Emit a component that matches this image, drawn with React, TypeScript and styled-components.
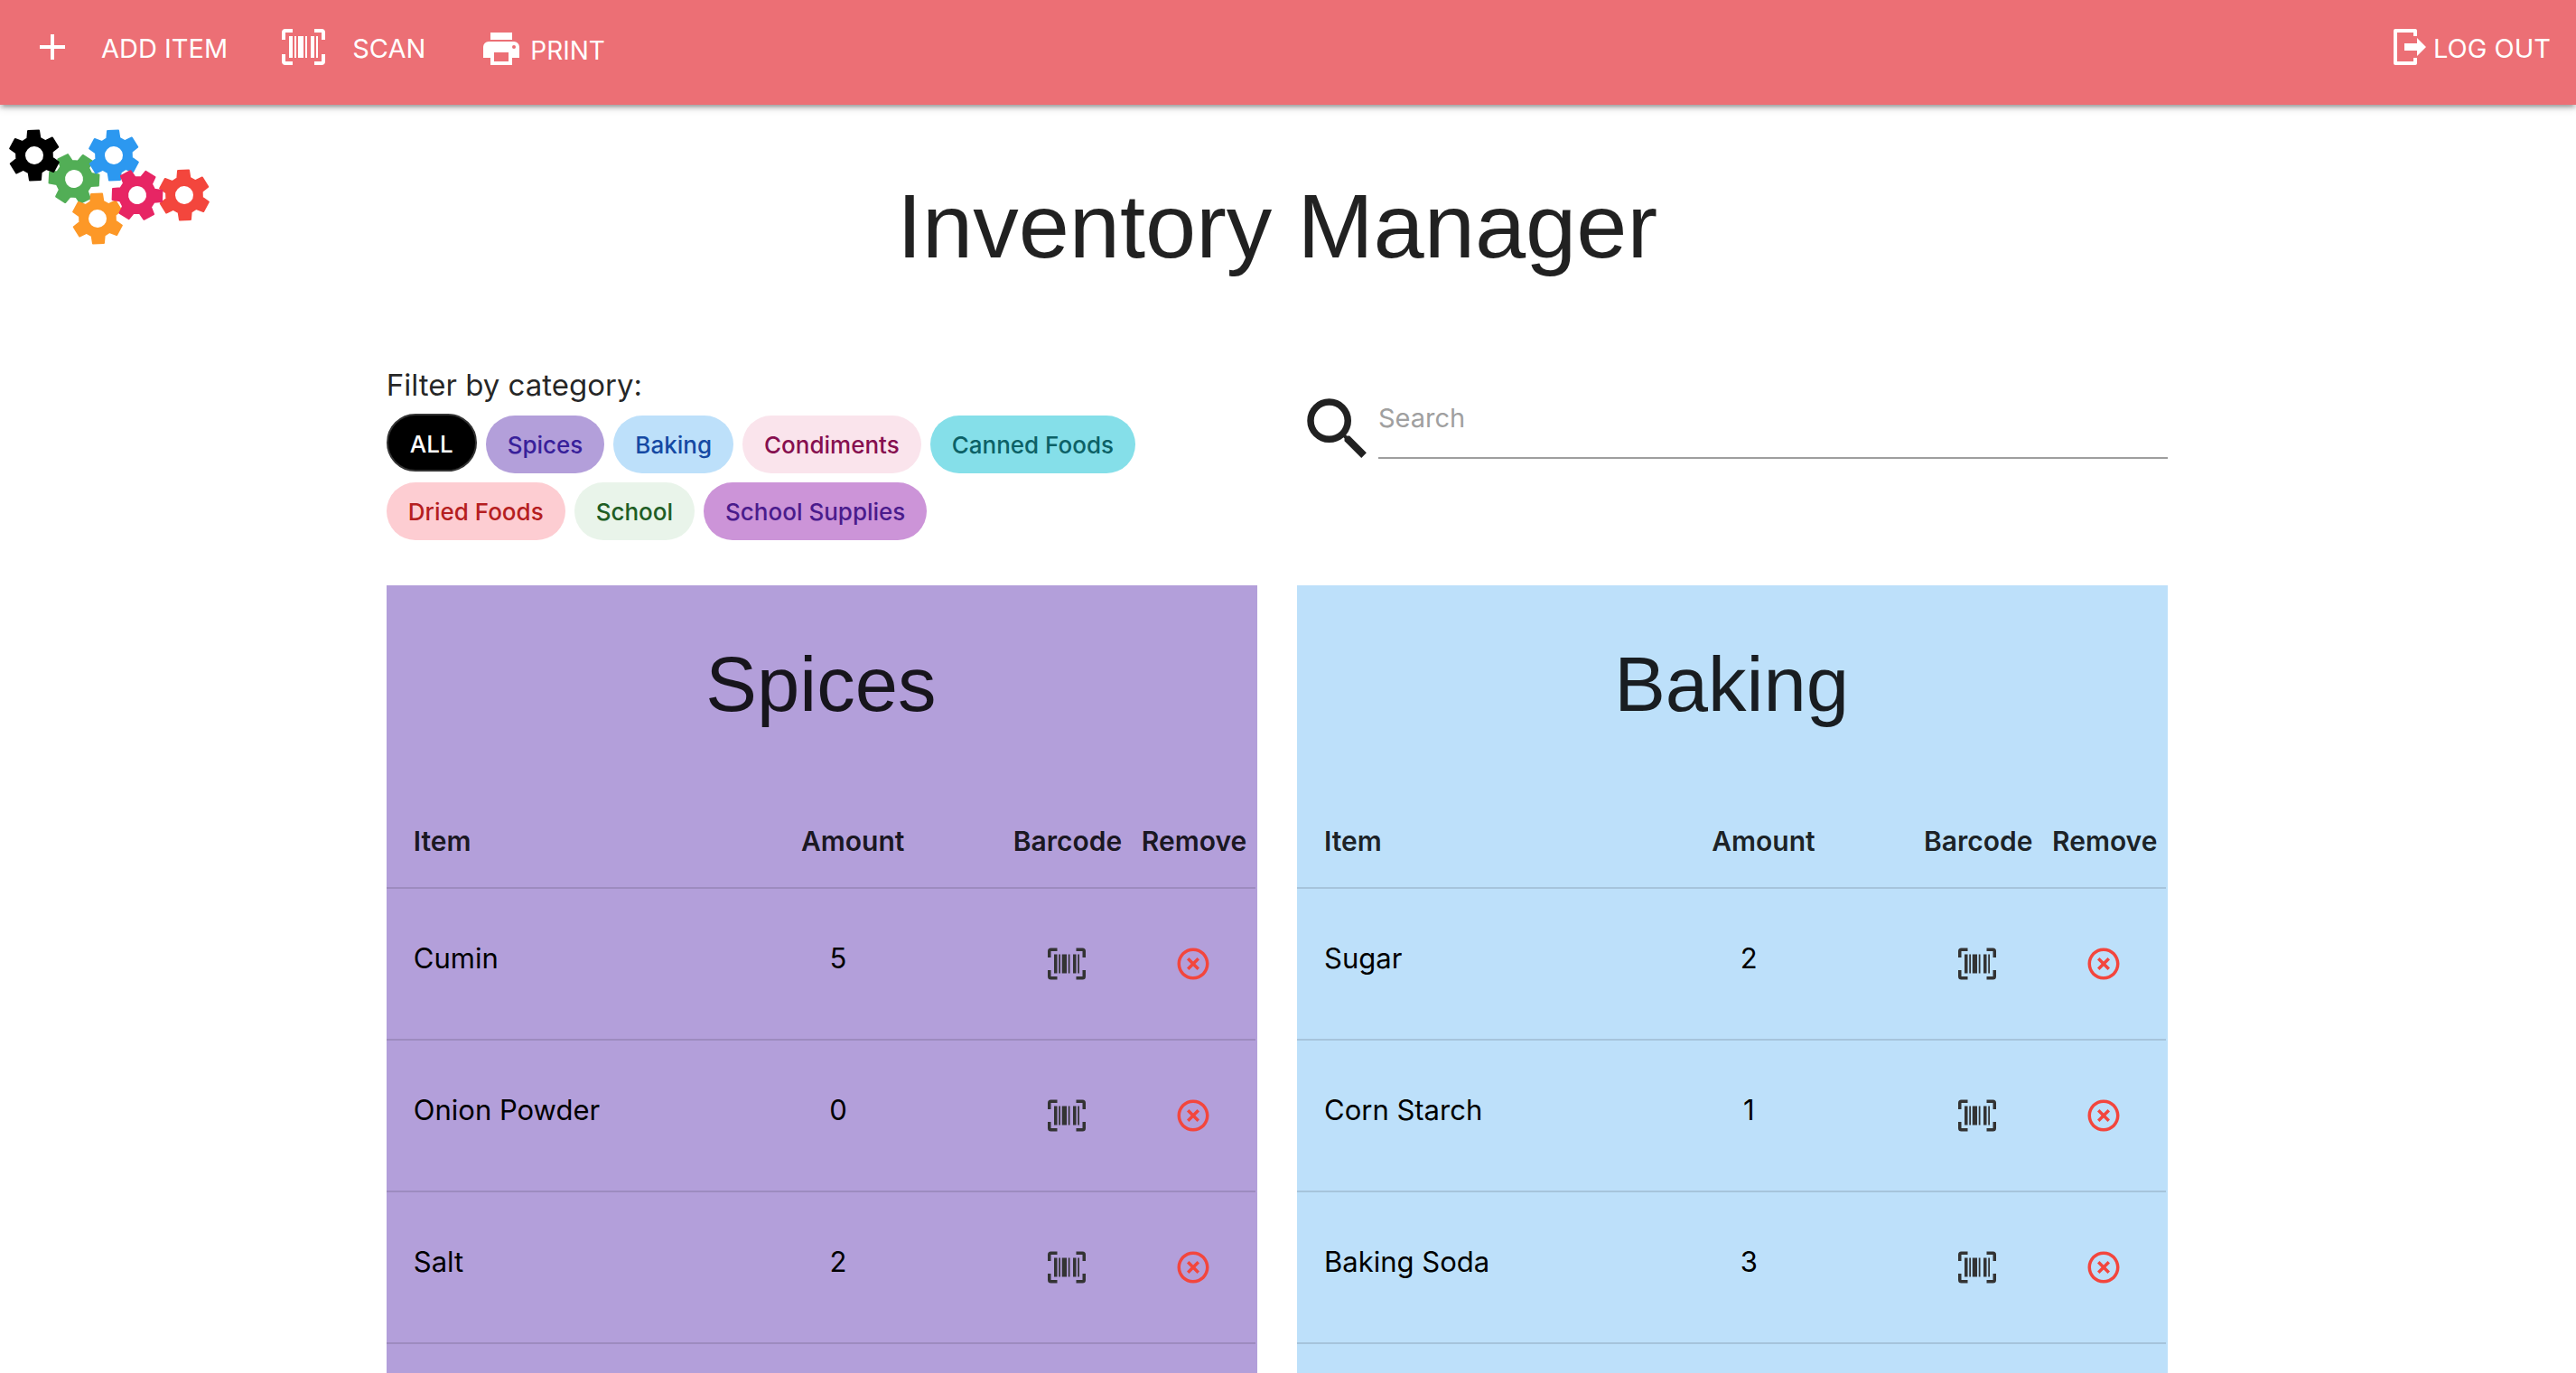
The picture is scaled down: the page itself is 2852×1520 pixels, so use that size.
import React from "react";
import styled, { createGlobalStyle } from "styled-components";

const GlobalStyle = createGlobalStyle`
  * { box-sizing: border-box; }
  body {
    margin: 0;
    background: #ffffff;
    color: rgba(0, 0, 0, 0.87);
    font-family: Inter, Roboto, "Liberation Sans", sans-serif;
    font-size: 29px;
    line-height: 44px;
  }
  button, input { font: inherit; color: inherit; }
  button { border: 0; background: none; padding: 0; margin: 0; cursor: pointer; }
`;

const Page = styled.div`
  min-height: 100vh;
  display: flex;
  flex-direction: column;
`;

const NavBar = styled.nav`
  position: relative;
  height: 116px;
  flex: none;
  display: flex;
  align-items: flex-start;
  padding: 28px 28px 0 34px;
  background: #ec6f75;
  color: #ffffff;
  box-shadow: 0 4px 4px 0 rgba(0, 0, 0, 0.14), 0 6px 2px -4px rgba(0, 0, 0, 0.12),
    0 2px 10px 0 rgba(0, 0, 0, 0.2);
`;

const NavButton = styled.button<{ $gap: number; $after?: number }>`
  display: flex;
  align-items: flex-start;
  gap: ${(p) => p.$gap}px;
  margin-right: ${(p) => p.$after ?? 0}px;
  line-height: 52px;
  white-space: nowrap;
`;

const PrintButton = styled(NavButton)`
  padding-top: 2px;
  font-size: 28px;
`;

const LogOutButton = styled(NavButton)`
  margin-left: auto;
`;

const Icon = styled.svg<{ $size: number; $color?: string }>`
  display: block;
  flex: none;
  width: ${(p) => p.$size}px;
  height: ${(p) => p.$size}px;
  fill: ${(p) => p.$color ?? "currentColor"};
`;

const Content = styled.div`
  flex: 1;
  display: grid;
  grid-template-columns: 15% minmax(0, 1fr) calc(15% + 24px);
  grid-template-rows: 1fr;
`;

const Logo = styled.svg`
  display: block;
  width: 240px;
  height: 160px;
`;

const Main = styled.main`
  display: flex;
  flex-direction: column;
`;

const Title = styled.h1`
  margin: 74px 0 86px;
  font-family: "Liberation Sans", Arial, sans-serif;
  font-size: 101px;
  font-weight: 400;
  line-height: 120px;
  text-align: center;
`;

const Columns = styled.div`
  display: grid;
  grid-template-columns: repeat(2, minmax(0, 1fr));
  column-gap: 44px;
`;

const Tools = styled(Columns)`
  margin-bottom: 50px;
`;

const Board = styled(Columns)`
  flex: 1;
`;

const FilterLabel = styled.h2`
  margin: 8px 0 10px;
  font-size: 33px;
  font-weight: 400;
  line-height: 44px;
`;

const Chips = styled.div`
  display: flex;
  flex-wrap: wrap;
  align-items: flex-end;
  gap: 10px;
`;

const Chip = styled.button<{ $bg: string; $fg: string }>`
  height: 64px;
  padding: 2px 24px 0;
  border-radius: 32px;
  background: ${(p) => p.$bg};
  color: ${(p) => p.$fg};
  font-size: 26px;
  font-weight: 500;
  line-height: 60px;
`;

const ActiveChip = styled(Chip)`
  padding-top: 4px;
  border: 2px solid #333333;
  margin-bottom: 2px;
  line-height: 56px;
`;

const Search = styled.label`
  display: flex;
  align-items: flex-start;
  padding-top: 34px;
`;

const SearchInput = styled.input`
  flex: 1;
  min-width: 0;
  height: 92px;
  margin-top: -14px;
  padding: 2px 0 0;
  border: 0;
  border-bottom: 2px solid #9e9e9e;
  outline: 0;
  background: transparent;
  &::placeholder { color: #a0a0a0; opacity: 1; }
`;

const Card = styled.section<{ $bg: string }>`
  background: ${(p) => p.$bg};
  padding: 62px 2px 0 0;
`;

const CardTitle = styled.h2`
  margin: 0 0 74px;
  font-family: "Liberation Sans", Arial, sans-serif;
  font-size: 85px;
  font-weight: 400;
  line-height: 96px;
  text-align: center;
`;

const Table = styled.table`
  width: 100%;
  table-layout: fixed;
  border-collapse: separate;
  border-spacing: 0;
`;

const Col = styled.col<{ $width?: number }>`
  width: ${(p) => (p.$width ? `${p.$width}px` : "auto")};
`;

const HeadCell = styled.th<{ $align?: string }>`
  height: 104px;
  padding: 0 10px;
  border-bottom: 2px solid rgba(0, 0, 0, 0.12);
  font-size: 30px;
  font-weight: 600;
  text-align: ${(p) => p.$align ?? "left"};
  &:first-child { padding-left: 30px; }
  &:nth-child(n + 3) { padding: 0; }
`;

const Cell = styled.td`
  height: 168px;
  padding: 0 12px 0 10px;
  border-bottom: 2px solid rgba(0, 0, 0, 0.12);
  color: #000000;
  font-size: 31px;
  &:first-child { padding-left: 30px; }
`;

const Value = styled.div<{ $width?: number }>`
  padding-bottom: 12px;
  width: ${(p) => (p.$width ? `${p.$width}px` : "auto")};
  text-align: ${(p) => (p.$width ? "center" : "left")};
`;

const IconButton = styled.button`
  display: block;
  margin: 0 auto;
`;

const PATHS = {
  plus: "M19,13H13V19H11V13H5V11H11V5H13V11H19V13Z",
  barcode:
    "M4,6H6V18H4V6M7,6H8V18H7V6M9,6H12V18H9V6M13,6H14V18H13V6M16,6H18V18H16V6M19,6H20V18H19V6M2,4V8H0V4A2,2 0 0,1 2,2H6V4H2M22,2A2,2 0 0,1 24,4V8H22V4H18V2H22M2,16V20H6V22H2A2,2 0 0,1 0,20V16H2M22,20V16H24V20A2,2 0 0,1 22,22H18V20H22Z",
  printer:
    "M18,3H6V7H18M19,12A1,1 0 0,1 18,11A1,1 0 0,1 19,10A1,1 0 0,1 20,11A1,1 0 0,1 19,12M16,19H8V14H16M19,8H5A3,3 0 0,0 2,11V17H6V21H18V17H22V11A3,3 0 0,0 19,8Z",
  logout:
    "M15,17V14H8V10H15V7L20,12L15,17M14,2A1,1 0 0,1 15,3V6H13V4H4V20H13V18H15V21A1,1 0 0,1 14,22H3A1,1 0 0,1 2,21V3A1,1 0 0,1 3,2H14Z",
  search:
    "M9.5,3A6.5,6.5 0 0,1 16,9.5C16,11.11 15.41,12.59 14.44,13.73L14.71,14H15.5L20.5,19L19,20.5L14,15.5V14.71L13.73,14.44C12.59,15.41 11.11,16 9.5,16A6.5,6.5 0 0,1 3,9.5A6.5,6.5 0 0,1 9.5,3M9.5,5C7,5 5,7 5,9.5C5,12 7,14 9.5,14C12,14 14,12 14,9.5C14,7 12,5 9.5,5Z",
  remove:
    "M12,20C7.59,20 4,16.41 4,12C4,7.59 7.59,4 12,4C16.41,4 20,7.59 20,12C20,16.41 16.41,20 12,20M12,2C6.47,2 2,6.47 2,12C2,17.53 6.47,22 12,22C17.53,22 22,17.53 22,12C22,6.47 17.53,2 12,2M14.59,8L12,10.59L9.41,8L8,9.41L10.59,12L8,14.59L9.41,16L12,13.41L14.59,16L16,14.59L13.41,12L16,9.41L14.59,8Z",
};

function Glyph({ name, size, color }: { name: keyof typeof PATHS; size: number; color?: string }) {
  return (
    <Icon $size={size} $color={color} viewBox="0 0 24 24" aria-hidden="true">
      <path d={PATHS[name]} />
    </Icon>
  );
}

/* One gear outline: six tapered teeth around a body, with a round hole.
   It is drawn one unit thin on every side; the stroke fills that in and rounds the corners. */
const GEAR_PATH = (() => {
  const tooth: [number, number][] = [[-7, -18.8], [-6, -27.2], [6, -27.2], [7, -18.8]];
  const points: string[] = [];
  for (let i = 0; i < 6; i++) {
    const a = (i * Math.PI) / 3;
    for (const [x, y] of tooth) {
      const px = x * Math.cos(a) - y * Math.sin(a);
      const py = x * Math.sin(a) + y * Math.cos(a);
      points.push(`${px.toFixed(2)},${py.toFixed(2)}`);
    }
  }
  return `M${points.join("L")}ZM11,0A11,11 0 1,0 -11,0A11,11 0 1,0 11,0Z`;
})();

const GEARS = [
  { x: 82, y: 82, turn: 33, color: "#52ae56" },
  { x: 38, y: 56, turn: -2, color: "#000000" },
  { x: 126, y: 56, turn: -2, color: "#2c98f0" },
  { x: 108, y: 126, turn: -2, color: "#fd9827" },
  { x: 204, y: 100, turn: -2, color: "#f3463d" },
  { x: 152, y: 100, turn: 32, color: "#e72564" },
];

const CHIPS = [
  { name: "Spices", bg: "#b39fda", fg: "#38209a" },
  { name: "Baking", bg: "#bde0fa", fg: "#1549a3" },
  { name: "Condiments", bg: "#fae4ec", fg: "#860f4f" },
  { name: "Canned Foods", bg: "#85dfe9", fg: "#0c6166" },
  { name: "Dried Foods", bg: "#fdcdd2", fg: "#b51e20" },
  { name: "School", bg: "#e9f4ea", fg: "#205d24" },
  { name: "School Supplies", bg: "#cc94d8", fg: "#4a1b8c" },
];

const CATEGORIES = [
  {
    name: "Spices",
    bg: "#b39fda",
    items: [
      { name: "Cumin", amount: 5 },
      { name: "Onion Powder", amount: 0 },
      { name: "Salt", amount: 2 },
    ],
  },
  {
    name: "Baking",
    bg: "#bde0fa",
    items: [
      { name: "Sugar", amount: 2 },
      { name: "Corn Starch", amount: 1 },
      { name: "Baking Soda", amount: 3 },
    ],
  },
];

export default function App() {
  return (
    <Page>
      <GlobalStyle />
      <NavBar>
        <NavButton $gap={30} $after={60}>
          <Glyph name="plus" size={48} />
          ADD ITEM
        </NavButton>
        <NavButton $gap={30} $after={60}>
          <Glyph name="barcode" size={48} />
          SCAN
        </NavButton>
        <PrintButton $gap={8}>
          <Glyph name="printer" size={48} />
          PRINT
        </PrintButton>
        <LogOutButton $gap={0}>
          <Glyph name="logout" size={48} />
          LOG OUT
        </LogOutButton>
      </NavBar>
      <Content>
        <Logo viewBox="0 0 240 160" aria-hidden="true">
          {GEARS.map((g) => (
            <path
              key={g.color}
              d={GEAR_PATH}
              fill={g.color}
              fillRule="evenodd"
              stroke={g.color}
              strokeWidth="2"
              strokeLinejoin="round"
              transform={`translate(${g.x} ${g.y}) rotate(${g.turn})`}
            />
          ))}
        </Logo>
        <Main>
          <Title>Inventory Manager</Title>
          <Tools>
            <div>
              <FilterLabel>Filter by category:</FilterLabel>
              <Chips>
                <ActiveChip $bg="#000000" $fg="#ffffff">ALL</ActiveChip>
                {CHIPS.map((c) => (
                  <Chip key={c.name} $bg={c.bg} $fg={c.fg}>
                    {c.name}
                  </Chip>
                ))}
              </Chips>
            </div>
            <Search>
              <Glyph name="search" size={90} />
              <SearchInput type="text" placeholder="Search" aria-label="Search" />
            </Search>
          </Tools>
          <Board>
            {CATEGORIES.map((cat) => (
              <Card key={cat.name} $bg={cat.bg}>
                <CardTitle>{cat.name}</CardTitle>
                <Table>
                  <colgroup>
                    <Col />
                    <Col $width={233} />
                    <Col $width={144} />
                    <Col $width={136} />
                  </colgroup>
                  <thead>
                    <tr>
                      <HeadCell>Item</HeadCell>
                      <HeadCell>Amount</HeadCell>
                      <HeadCell $align="center">Barcode</HeadCell>
                      <HeadCell $align="center">Remove</HeadCell>
                    </tr>
                  </thead>
                  <tbody>
                    {cat.items.map((item) => (
                      <tr key={item.name}>
                        <Cell>
                          <Value>{item.name}</Value>
                        </Cell>
                        <Cell>
                          <Value $width={82}>{item.amount}</Value>
                        </Cell>
                        <Cell>
                          <IconButton aria-label="Barcode">
                            <Glyph name="barcode" size={42} color="#333333" />
                          </IconButton>
                        </Cell>
                        <Cell>
                          <IconButton aria-label="Remove">
                            <Glyph name="remove" size={42} color="#f3463d" />
                          </IconButton>
                        </Cell>
                      </tr>
                    ))}
                  </tbody>
                </Table>
              </Card>
            ))}
          </Board>
        </Main>
      </Content>
    </Page>
  );
}
